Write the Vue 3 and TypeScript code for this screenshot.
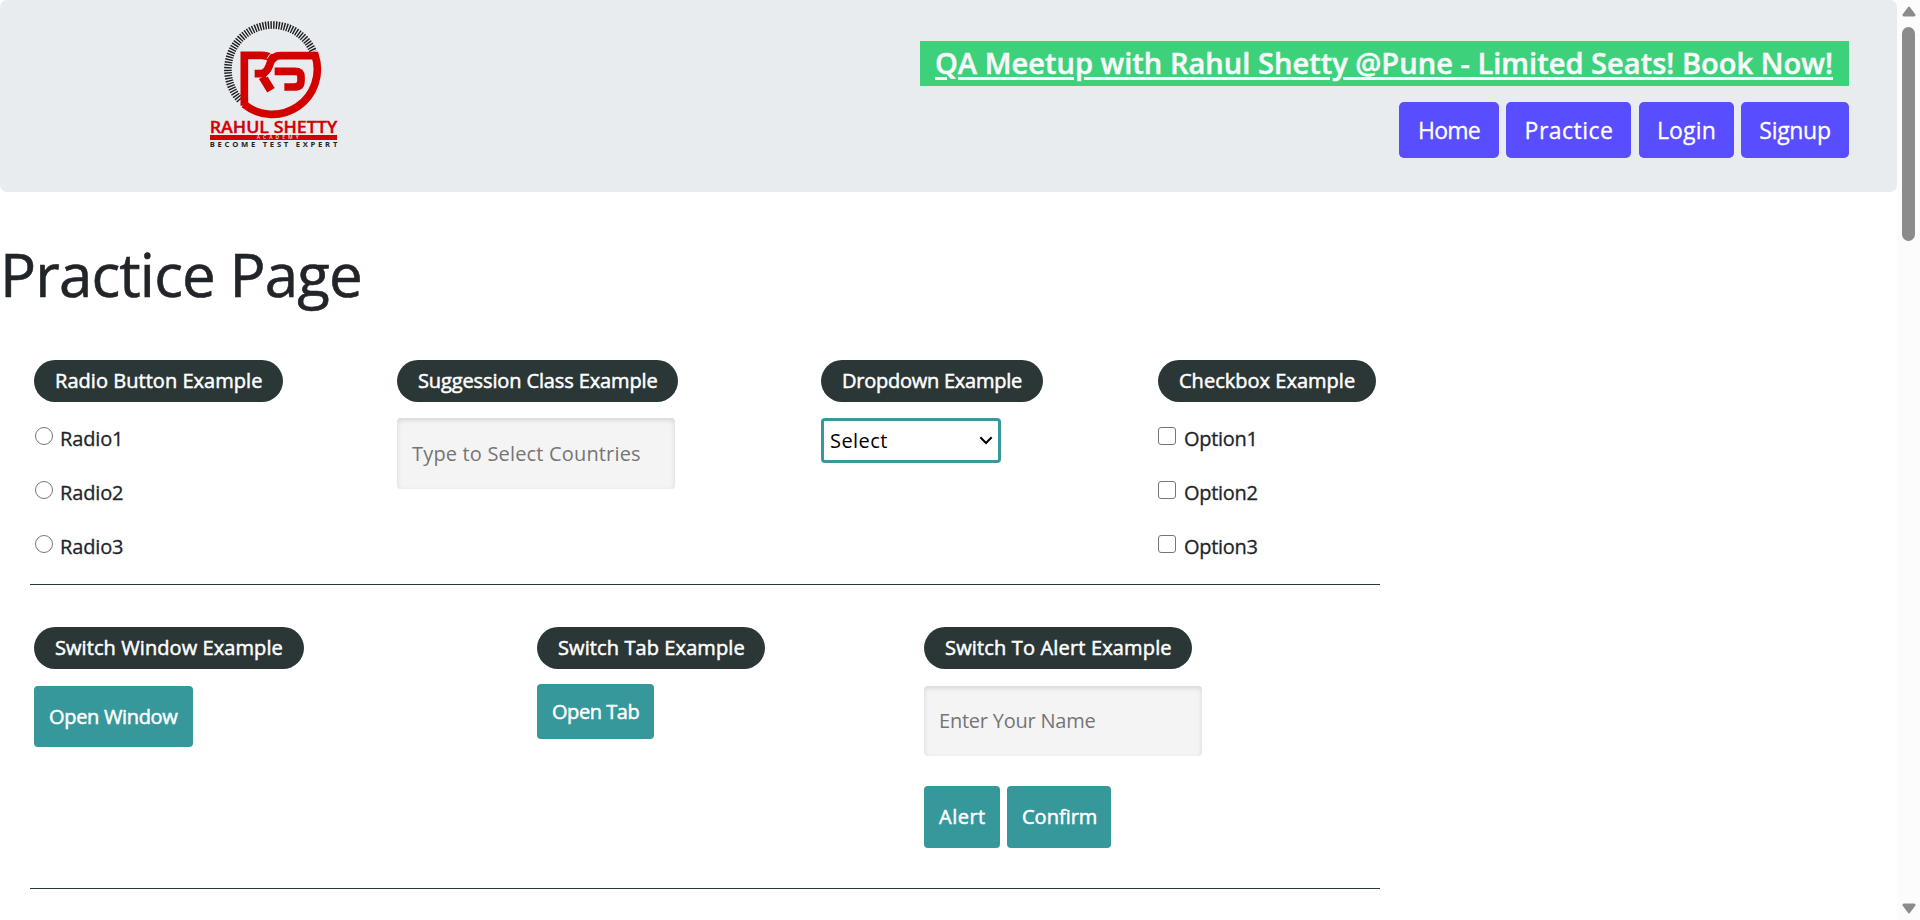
<script setup lang="ts">
import { ref } from 'vue'

interface Choice {
  id: string
  label: string
}

const navItems: Choice[] = [
  { id: 'home', label: 'Home' },
  { id: 'practice', label: 'Practice' },
  { id: 'login', label: 'Login' },
  { id: 'signup', label: 'Signup' },
]
const radios: Choice[] = [1, 2, 3].map((n) => ({ id: `radio${n}`, label: `Radio${n}` }))
const options: Choice[] = [1, 2, 3].map((n) => ({ id: `option${n}`, label: `Option${n}` }))

const picked = ref('')
const checked = ref<string[]>([])
const country = ref('')
const person = ref('')
const selected = ref('Select')
</script>

<template>
  <div class="window">
    <div class="page">
      <header class="header">
        <svg class="logo" viewBox="0 0 510 450" width="170" height="150" role="img" aria-label="Rahul Shetty Academy">
          <path d="M150 270 A133.500 133.500 0 1 1 370 126" fill="none" stroke="#1b1d1e" stroke-width="23" stroke-dasharray="4.200 3.800" />
          <g fill="none" stroke="#d30000" stroke-width="23">
            <path d="M163 287 V136 H214 Q232 136 241 143" />
            <path d="M162 283 A135 135 0 0 0 375.600 137 H272 Q250 137 241 158 Q232 191 210 191 H194" stroke-linejoin="miter" />
            <path d="M254 184 H314 Q333 184 333 200 V212 Q333 231 312 231 H283" />
            <path d="M218 200 L243 241" stroke-width="26" />
          </g>
          <path d="M231 146 Q238 134 246 127 M228 201 Q244 193 252 171" fill="none" stroke="#e9ecef" stroke-width="3" />
          <text class="mark-name" x="59" y="369" textLength="383" lengthAdjust="spacingAndGlyphs">RAHUL SHETTY</text>
          <rect x="60" y="375" width="381" height="15" fill="#d30000" />
          <text class="mark-sub" x="200" y="388" textLength="126">ACADEMY</text>
          <text class="mark-tag" x="59" y="411" textLength="383">BECOME TEST EXPERT</text>
        </svg>
        <div class="header-side">
          <a class="banner">QA Meetup with Rahul Shetty @Pune - Limited Seats! Book Now!</a>
          <nav class="nav">
            <button v-for="item in navItems" :key="item.id" type="button" :class="['nav-btn', item.id]">{{ item.label }}</button>
          </nav>
        </div>
      </header>

      <h1 class="title">Practice Page</h1>

      <main class="content">
        <section class="row row-first">
          <div class="cell">
            <h2 class="pill p-radio">Radio Button Example</h2>
            <div class="choices">
              <label v-for="r in radios" :key="r.id" class="choice">
                <input v-model="picked" class="box round" type="radio" name="sample" :value="r.id" />
                <span class="radio-text">{{ r.label }}</span>
              </label>
            </div>
          </div>
          <div class="cell">
            <h2 class="pill p-suggest">Suggession Class Example</h2>
            <input v-model="country" class="field f-country" type="text" placeholder="Type to Select Countries" />
          </div>
          <div class="cell">
            <h2 class="pill p-drop">Dropdown Example</h2>
            <div class="select-wrap">
              <select v-model="selected" class="select">
                <option>Select</option>
                <option>Option1</option>
                <option>Option2</option>
                <option>Option3</option>
              </select>
              <svg class="chevron" width="14" height="9" viewBox="0 0 14 9">
                <path d="M1.300 1.300 L7 7 L12.700 1.300" fill="none" stroke="#000" stroke-width="2" />
              </svg>
            </div>
          </div>
          <div class="cell">
            <h2 class="pill p-check">Checkbox Example</h2>
            <div class="choices">
              <label v-for="o in options" :key="o.id" class="choice">
                <input v-model="checked" class="box" type="checkbox" :value="o.id" />
                <span class="option-text">{{ o.label }}</span>
              </label>
            </div>
          </div>
        </section>

        <section class="row row-second">
          <div class="cell">
            <h2 class="pill p-window">Switch Window Example</h2>
            <button type="button" class="btn b-window">Open Window</button>
          </div>
          <div class="cell">
            <h2 class="pill p-tab">Switch Tab Example</h2>
            <a class="btn b-tab">Open Tab</a>
          </div>
          <div class="cell">
            <h2 class="pill p-alert">Switch To Alert Example</h2>
            <input v-model="person" class="field f-name" type="text" placeholder="Enter Your Name" />
            <div class="actions">
              <button type="button" class="btn b-alert">Alert</button>
              <button type="button" class="btn b-confirm">Confirm</button>
            </div>
          </div>
        </section>
      </main>
    </div>

    <div class="scrollbar" aria-hidden="true">
      <svg width="14" height="11" viewBox="0 0 14 11"><path d="M6 1.200 Q7 0 8 1.200 L13.400 8.500 Q14 10.500 12 10.500 H2 Q0 10.500 .6 8.500 Z" fill="#8b8b8b" /></svg>
      <div class="thumb"></div>
      <svg width="14" height="11" viewBox="0 0 14 11"><path d="M6 9.800 Q7 11 8 9.800 L13.400 2.500 Q14 .5 12 .5 H2 Q0 .5 .6 2.500 Z" fill="#8b8b8b" /></svg>
    </div>
  </div>
</template>

<style>
body {
  margin: 0;
  overflow: hidden;
  background: #fff;
}
</style>

<style scoped>
.window,
.window button,
.window input,
.window select {
  font-family: "Trebuchet MS", "Open Sans", "Noto Sans", sans-serif;
}
.window {
  display: flex;
  height: 920px;
  overflow: hidden;
  color: #212529;
  font-size: 20px;
}
.window * {
  box-sizing: border-box;
}
.page {
  flex: 1;
  min-width: 0;
}

.header {
  display: flex;
  justify-content: space-between;
  align-items: flex-start;
  height: 192px;
  padding: 10px 48px 0 190px;
  border-radius: 7px;
  background: #e9ecef;
}
.mark-name,
.mark-sub,
.mark-tag {
  font-family: "Open Sans", sans-serif;
}
.mark-name {
  font-size: 47px;
  font-weight: 600;
  fill: #d30000;
  stroke: #d30000;
  stroke-width: 1px;
}
.mark-sub {
  font-size: 15px;
  font-weight: 600;
  fill: #f3dcdf;
}
.mark-tag {
  font-size: 23px;
  font-weight: 700;
  fill: #222425;
}
.header-side {
  display: flex;
  flex-direction: column;
  align-items: flex-end;
  gap: 16px;
  padding-top: 31px;
}
.banner {
  width: 929px;
  height: 45px;
  padding-left: 15px;
  background: #3dd17c;
  color: #f8f9fa;
  font-size: 29px;
  font-weight: 600;
  line-height: 43px;
  letter-spacing: 0.04px;
  white-space: nowrap;
  text-decoration: underline;
  text-decoration-thickness: 3px;
  text-underline-offset: 3px;
  -webkit-text-stroke: 0.5px currentColor;
}
.nav {
  display: flex;
  gap: 7px;
}
.nav-btn {
  height: 56px;
  padding: 0;
  border: 0;
  border-radius: 5px;
  background: #584dff;
  color: #fff;
  font-size: 23px;
  -webkit-text-stroke: 0.3px currentColor;
}
.home {
  width: 100px;
  letter-spacing: -0.75px;
}
.practice {
  width: 125px;
  padding-left: 1px;
  letter-spacing: 0.48px;
}
.login {
  width: 95px;
  margin-left: 1px;
  letter-spacing: 0.2px;
}
.signup {
  width: 108px;
  letter-spacing: -0.32px;
}

.title {
  margin: 46px 0 0;
  font-size: 60px;
  font-weight: 400;
  line-height: 72px;
  letter-spacing: -0.85px;
  -webkit-text-stroke: 0.6px currentColor;
}

.content {
  width: 1350px;
  margin: 50px 0 0 30px;
}
.row {
  display: grid;
  padding-left: 4px;
  border-bottom: 1px solid #2b3737;
}
.row-first {
  grid-template-columns: 363px 424px 337px 222px;
  height: 225px;
}
.row-second {
  grid-template-columns: 503px 387px 1fr;
  height: 304px;
  padding-top: 42px;
}
.pill {
  height: 42px;
  margin: 0;
  padding-left: 21px;
  border-radius: 21px;
  background: #2b3737;
  color: #fff;
  font-size: 20px;
  font-weight: 400;
  line-height: 41px;
  white-space: nowrap;
  -webkit-text-stroke: 0.5px currentColor;
}
.p-radio { width: 249px; letter-spacing: 0.04px; }
.p-suggest { width: 281px; letter-spacing: -0.12px; }
.p-drop { width: 222px; letter-spacing: -0.25px; }
.p-check { width: 218px; letter-spacing: 0.02px; }
.p-window { width: 270px; letter-spacing: 0.08px; }
.p-tab { width: 228px; letter-spacing: 0.1px; }
.p-alert { width: 268px; letter-spacing: 0.16px; }

.choices {
  margin-top: 9px;
}
.choice {
  display: flex;
  align-items: center;
  height: 54px;
  -webkit-text-stroke: 0.3px currentColor;
}
.box {
  appearance: none;
  width: 18px;
  height: 18px;
  margin: 0 8px 4px 0;
  border: 1px solid #767676;
  border-radius: 3px;
  background: #fff;
}
.round {
  margin: 0 7px 4px 1px;
  border-radius: 50%;
}
.radio-text { letter-spacing: -0.15px; }
.option-text { letter-spacing: -0.29px; }

.field {
  display: block;
  width: 278px;
  padding: 0 0 0 15px;
  border: 0;
  border-radius: 4px;
  outline: 0;
  background: #f4f4f4;
  box-shadow: inset 0 2px 5px rgba(0, 0, 0, 0.13);
  font-size: 20px;
}
.field::placeholder {
  color: #757575;
  opacity: 1;
}
.f-country {
  height: 71px;
  margin-top: 16px;
  letter-spacing: 0.17px;
}
.f-name {
  height: 70px;
  margin-top: 17px;
  padding-bottom: 1px;
  letter-spacing: -0.22px;
}
.select-wrap {
  position: relative;
  width: 180px;
  margin-top: 16px;
}
.select {
  display: block;
  appearance: none;
  width: 180px;
  height: 45px;
  padding: 0 0 0 6px;
  border: 3px solid #36989b;
  border-radius: 4px;
  outline: 0;
  background: #fff;
  color: #000;
  font-size: 20px;
  letter-spacing: 0.45px;
}
.chevron {
  position: absolute;
  top: 18px;
  right: 8px;
  pointer-events: none;
}

.btn {
  display: flex;
  align-items: center;
  justify-content: flex-start;
  padding: 0 0 1px 15px;
  border: 0;
  border-radius: 4px;
  background: #36989b;
  color: #fff;
  font-size: 20px;
  -webkit-text-stroke: 0.5px currentColor;
}
.b-window { width: 159px; height: 61px; margin-top: 17px; letter-spacing: -0.32px; }
.b-tab { width: 117px; height: 55px; margin-top: 15px; letter-spacing: -0.44px; }
.actions {
  display: flex;
  gap: 7px;
  margin-top: 30px;
}
.b-alert { width: 76px; height: 62px; letter-spacing: 0.5px; }
.b-confirm { width: 104px; height: 62px; letter-spacing: 0; }

.scrollbar {
  display: flex;
  flex-direction: column;
  align-items: center;
  width: 23px;
  height: 920px;
  padding: 6px 0;
  background: #fcfcfc;
}
.thumb {
  width: 13px;
  height: 214px;
  margin: 10px 0 auto;
  border-radius: 6.5px;
  background: #8b8b8b;
}
</style>
